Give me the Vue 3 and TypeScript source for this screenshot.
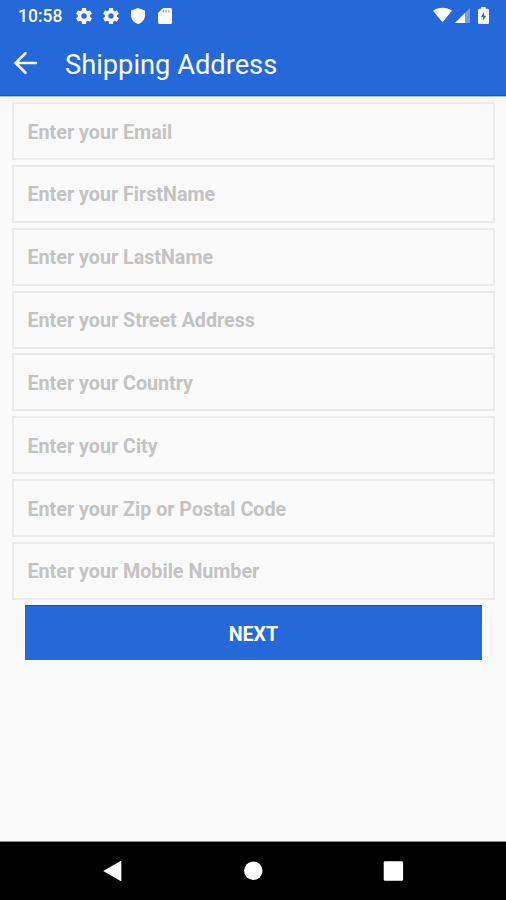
<script setup lang="ts">
import { reactive } from 'vue'

interface Field {
  key: string
  label: string
}

const fields: Field[] = [
  { key: 'email', label: 'Enter your Email' },
  { key: 'firstName', label: 'Enter your FirstName' },
  { key: 'lastName', label: 'Enter your LastName' },
  { key: 'street', label: 'Enter your Street Address' },
  { key: 'country', label: 'Enter your Country' },
  { key: 'city', label: 'Enter your City' },
  { key: 'zip', label: 'Enter your Zip or Postal Code' },
  { key: 'mobile', label: 'Enter your Mobile Number' },
]

const form = reactive<Record<string, string>>({})

const gearPath =
  'M19.43 12.98c.04-.32.07-.64.07-.98s-.03-.66-.07-.98l2.11-1.65c.19-.15.24-.42.12-.64l-2-3.46c-.12-.22-.39-.3-.61-.22l-2.49 1c-.52-.4-1.08-.73-1.69-.98l-.38-2.65C14.46 2.18 14.25 2 14 2h-4c-.25 0-.46.18-.49.42l-.38 2.65c-.61.25-1.17.59-1.69.98l-2.49-1c-.23-.09-.49 0-.61.22l-2 3.46c-.13.22-.07.49.12.64l2.11 1.65c-.04.32-.07.65-.07.98s.03.66.07.98l-2.11 1.65c-.19.15-.24.42-.12.64l2 3.46c.12.22.39.3.61.22l2.49-1c.52.4 1.08.73 1.69.98l.38 2.65c.03.24.24.42.49.42h4c.25 0 .46-.18.49-.42l.38-2.65c.61-.25 1.17-.59 1.69-.98l2.49 1c.23.09.49 0 .61-.22l2-3.46c.12-.22.07-.49-.12-.64l-2.11-1.65zM12 15.5c-1.93 0-3.5-1.57-3.5-3.5s1.57-3.5 3.5-3.5 3.5 1.57 3.5 3.5-1.57 3.5-3.5 3.5z'
</script>

<template>
  <div class="screen">
    <header class="top">
      <div class="status">
        <span class="clock">10:58</span>
        <div class="notices">
          <svg v-for="n in 2" :key="n" class="gear" viewBox="2 2 20 20"><path :d="gearPath" /></svg>
          <svg class="shield" viewBox="3 1 18 22" preserveAspectRatio="none">
            <path d="M12 1 3 4.500v6.500c0 5.55 3.84 10.74 9 12 5.16-1.26 9-6.45 9-12V4.500z" />
          </svg>
          <svg class="card" viewBox="0 0 14 16">
            <path d="M5 0h7.500Q14 0 14 1.500v13q0 1.500-1.500 1.500h-11Q0 16 0 14.500V5z" />
            <path class="slots" d="M5.500 2v2.600M8.200 2v2.600M10.900 2v2.600" />
          </svg>
        </div>
        <div class="system">
          <svg class="wifi" viewBox="0 0 20 16"><path d="M0 3.500C5.500-.7 14.500-.7 20 3.500L10 15.500z" /></svg>
          <svg class="signal" viewBox="0 0 15 15">
            <path d="M15 0v15H0z" opacity=".35" />
            <path d="M10 5v10H0z" />
          </svg>
          <svg class="battery" viewBox="0 0 11 17">
            <path fill-rule="evenodd" d="M3.300 0h4.400v1.700h2.100q1.200 0 1.200 1.200v12.900q0 1.200-1.200 1.200H1.200Q0 17 0 15.800V2.900q0-1.200 1.200-1.200h2.100zM6 5 3 9.900h2.100v3.700L8.200 8.700H6z" />
          </svg>
        </div>
      </div>
      <div class="bar">
        <button class="back" aria-label="Back">
          <svg viewBox="0 0 24 24">
            <path d="M22.500 12H2.500M12 2.200 2.200 12l9.800 9.800" />
          </svg>
        </button>
        <h1>Shipping Address</h1>
      </div>
    </header>

    <form class="form" @submit.prevent>
      <input v-for="f in fields" :key="f.key" v-model="form[f.key]" class="field" type="text" :placeholder="f.label" />
      <button class="next" type="submit">NEXT</button>
    </form>

    <nav class="nav">
      <svg viewBox="0 0 22 22"><path d="M1.200 11 18.500 1.100q.8-.4.8.5v18.800q0 .9-.8.5z" /></svg>
      <svg viewBox="0 0 22 22"><circle cx="11.300" cy="10.700" r="9.200" /></svg>
      <svg viewBox="0 0 22 22"><rect x="1.700" y="1.300" width="19.400" height="19.400" rx="1.300" /></svg>
    </nav>
  </div>
</template>

<style>
body {
  margin: 0;
}
</style>

<style scoped>
.screen {
  display: flex;
  flex-direction: column;
  width: 100%;
  height: 900px;
  overflow: hidden;
  background: #fafafa;
  font-family: Roboto, sans-serif;
}
svg {
  display: block;
  fill: #fff;
}
.top {
  box-sizing: border-box;
  flex: none;
  height: 97px;
  background: #2468d9;
  border-bottom: 1px solid #a3c1f1;
  box-shadow: inset 0 -1px #0d56cc;
  color: #fff;
}
.status {
  display: flex;
  align-items: center;
  height: 31px;
  padding: 0 17px 0 18px;
}
.clock {
  width: 58px;
  font-size: 17.500px;
  font-weight: 500;
  line-height: 31px;
  padding-top: 1px;
}
.notices {
  display: flex;
  align-items: center;
}
.gear {
  width: 16px;
  height: 16px;
  margin-right: 11px;
}
.shield {
  width: 14px;
  height: 16px;
  margin: 0 13px 0 1px;
}
.card {
  width: 14px;
  height: 16px;
}
.slots {
  fill: none;
  stroke: #7fa6e8;
  stroke-width: 1.200;
}
.system {
  display: flex;
  align-items: center;
  margin-left: auto;
}
.wifi {
  width: 19px;
  height: 16px;
  margin: 0 3px 2px 0;
}
.signal {
  width: 15px;
  height: 15px;
  margin-right: 8px;
}
.battery {
  width: 11px;
  height: 17px;
}
.bar {
  display: flex;
  align-items: center;
  height: 64px;
  padding-left: 13px;
}
.back {
  width: 52px;
  padding: 0;
  border: 0;
  background: none;
}
.back svg {
  width: 25px;
  height: 24px;
  fill: none;
  stroke: #f2f6ff;
  stroke-width: 2.700;
  stroke-linecap: round;
}
h1 {
  margin: 4px 0 0;
  font-size: 27.250px;
  font-weight: 400;
  line-height: 32px;
}
.form {
  display: flex;
  flex: 1;
  flex-direction: column;
  gap: 4.850px;
  padding: 5px 11px 0 12px;
}
.field {
  box-sizing: border-box;
  flex: none;
  width: 100%;
  height: 58px;
  padding: 2px 14px 0 13.500px;
  border: 2px solid #ebebeb;
  border-radius: 0;
  outline: none;
  background: #fafafa;
  color: #333;
  font: 700 19.700px Roboto, sans-serif;
}
.field::placeholder {
  color: #c3c3c3;
  opacity: 1;
}
.next {
  height: 55px;
  margin: 0 13px;
  padding: 4px 0 0;
  border: 0;
  border-top: 1px solid #0f51c0;
  background: #2468d9;
  color: #fff;
  font: 700 19.700px Roboto, sans-serif;
}
.nav {
  display: flex;
  flex: none;
  align-items: center;
  justify-content: space-between;
  box-sizing: border-box;
  height: 59px;
  padding: 0 102px;
  border-top: 1px solid #8a8a8a;
  background: #000;
}
.nav svg {
  width: 22px;
  height: 22px;
}
</style>
